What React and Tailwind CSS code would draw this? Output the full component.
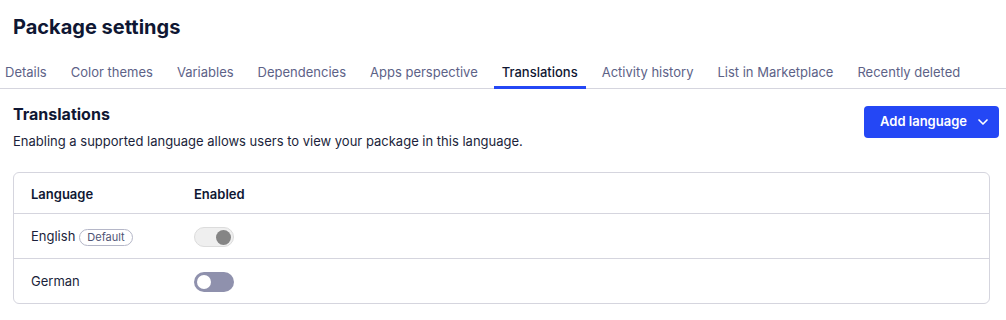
import { ChevronDown } from "lucide-react";

const tabs = [
  "Details",
  "Color themes",
  "Variables",
  "Dependencies",
  "Apps perspective",
  "Translations",
  "Activity history",
  "List in Marketplace",
  "Recently deleted",
];

function Toggle({ on, disabled }) {
  if (disabled) {
    return (
      <div className="flex h-5 w-10 items-center justify-end rounded-full border border-[#dcdcdc] bg-[#efefef] px-[2px]">
        <div className="h-[15px] w-[15px] rounded-full bg-[#858585]" />
      </div>
    );
  }
  return (
    <div
      className={`flex h-5 w-10 items-center rounded-full px-[3px] ${
        on ? "justify-end bg-[#2447f5]" : "justify-start bg-[#8f91ad]"
      }`}
    >
      <div className="h-[14px] w-[14px] rounded-full bg-white" />
    </div>
  );
}

export default function App() {
  return (
    <div
      className="min-h-[320px] bg-white text-[#1b1f3b]"
      style={{ fontFamily: "Inter, 'Noto Sans', sans-serif" }}
    >
      <div className="px-[13px] pt-[14px]">
        <h1 className="text-[20px] font-bold leading-[26px] text-[#0f1733]">
          Package settings
        </h1>
      </div>

      <div className="mt-[22px] flex border-b border-[#d5d5de]">
        <div className="-ml-[3px] flex gap-[8px]">
          {tabs.map((t) => {
            const active = t === "Translations";
            return (
              <div
                key={t}
                className={`-mb-px px-2 pb-[4px] text-[13px] leading-[20px] ${
                  active
                    ? "border-b-[3px] border-[#2447f5] font-medium text-[#0f1733]"
                    : "border-b-[3px] border-transparent text-[#5d6287]"
                }`}
              >
                {t}
              </div>
            );
          })}
        </div>
      </div>

      <div className="flex items-start justify-between px-[13px] pt-[14px]">
        <div>
          <h2 className="text-[16px] font-bold leading-[22px] text-[#0f1733]">
            Translations
          </h2>
          <p className="mt-[7px] text-[13px] leading-[18px] text-[#1b1f3b]">
            Enabling a supported language allows users to view your package in
            this language.
          </p>
        </div>
        <button className="mr-[-6px] mt-[3px] flex h-8 items-center gap-[8px] rounded-[4px] bg-[#2447f5] pl-4 pr-[8px] text-[13px] font-semibold text-white">
          Add language
          <ChevronDown size={16} strokeWidth={2.5} />
        </button>
      </div>

      <div className="mx-[13px] mt-[22px] mr-[16px] rounded-[6px] border border-[#d5d5de]">
        <div className="flex h-[41px] items-center border-b border-[#d5d5de] pt-[3px] text-[13px] font-semibold text-[#0f1733]">
          <div className="w-[180px] pl-[17px]">Language</div>
          <div>Enabled</div>
        </div>
        <div className="flex h-[45px] items-center border-b border-[#d5d5de] pt-[2px] text-[13px]">
          <div className="flex w-[180px] items-center gap-[4px] pl-[17px]">
            English
            <span className="rounded-full border border-[#b5b7c8] px-[7px] text-[11px] leading-[15px] text-[#4f5475]">
              Default
            </span>
          </div>
          <Toggle disabled />
        </div>
        <div className="flex h-[44px] items-center pt-[2px] text-[13px]">
          <div className="w-[180px] pl-[17px]">German</div>
          <Toggle />
        </div>
      </div>
    </div>
  );
}
